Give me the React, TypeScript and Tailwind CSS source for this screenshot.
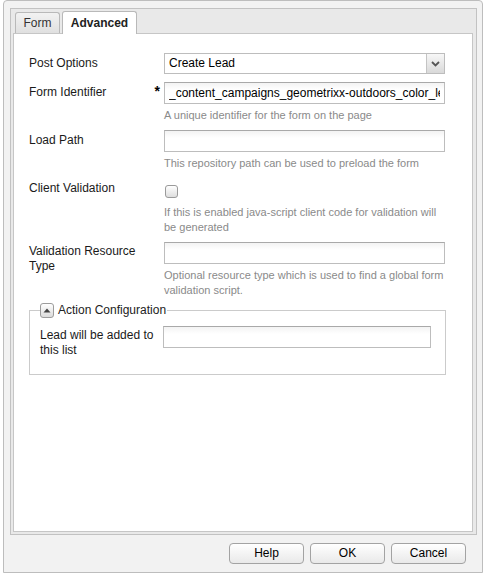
import React from "react";

const font = { fontFamily: '"Liberation Sans", Arial, sans-serif' };

const inputCls =
  "block w-full h-[22px] border border-[#bdbdbd] border-t-[#a9a9a9] bg-gradient-to-b from-[#f3f3f3] to-white to-[35%] px-[4px] text-[12px] text-black outline-none";

const Helper: React.FC<{ children: React.ReactNode }> = ({ children }) => (
  <div className="mt-[4px] whitespace-nowrap text-[11px] leading-[15px] text-[#8a8a8a]">
    {children}
  </div>
);

const Button: React.FC<{ label: string }> = ({ label }) => (
  <button className="h-[21px] w-[75px] rounded-[4px] border border-[#a3a3a3] bg-gradient-to-b from-white to-[#e9e9e9] text-[12px] leading-[19px] text-black">
    {label}
  </button>
);

export default function App() {
  return (
    <div className="min-h-screen bg-white text-[12px] text-[#1a1a1a]" style={font}>
      <div className="ml-[3px] flex h-[573px] w-[480px] flex-col rounded-t-[4px] border border-[#bdbdbd] bg-[#f2f2f2] pl-[6px] pr-[5px] pt-[7px]">
        {/* tab panel */}
        <div className="flex h-[527px] flex-col border border-[#c2c2c2] bg-[#e9e9e9] pb-[2px] pl-[2px] pr-[3px] pt-[2px]">
          <div className="flex h-[22px] items-end gap-[2px] pl-[2px]">
            <div className="flex h-[21px] w-[45px] items-center justify-center rounded-t-[3px] border border-b-0 border-[#b9b9b9] bg-gradient-to-b from-[#f2f2f2] to-[#e0e0e0] text-[12px] text-[#333]">
              Form
            </div>
            <div className="relative z-10 -mb-px flex h-[23px] w-[75px] items-center justify-center rounded-t-[3px] border border-b-0 border-[#b9b9b9] bg-white pb-[1px] text-[12px] font-bold text-[#222]">
              Advanced
            </div>
          </div>

          <div className="flex-1 border border-[#c6c6c6] bg-white pl-[15px] pt-[19px]">
            <div className="grid grid-cols-[135px_281px]">
              {/* Post Options */}
              <div className="pt-[3px] leading-[15px]">Post Options</div>
              <div className="flex h-[21px] border border-[#bdbdbd] bg-white">
                <div className="flex-1 px-[4px] leading-[19px] text-black">Create Lead</div>
                <div className="flex w-[18px] items-center justify-center border-l border-[#c4c4c4] bg-gradient-to-b from-[#f7f7f7] to-[#d9d9d9]">
                  <svg width="9" height="6" viewBox="0 0 9 6">
                    <path d="M1 1 L4.5 4.5 L8 1" fill="none" stroke="#555" strokeWidth="1.8" />
                  </svg>
                </div>
              </div>

              {/* Form Identifier */}
              <div className="mt-[8px] flex justify-between pr-[4px] pt-[3px] leading-[15px]">
                <span>Form Identifier</span>
                <span className="text-[14px] font-bold leading-[12px] text-black">*</span>
              </div>
              <div className="mt-[8px]">
                <input
                  readOnly
                  className={inputCls}
                  value="_content_campaigns_geometrixx-outdoors_color_lead_form"
                />
                <Helper>A unique identifier for the form on the page</Helper>
              </div>

              {/* Load Path */}
              <div className="mt-[7px] pt-[3px] leading-[15px]">Load Path</div>
              <div className="mt-[7px]">
                <input readOnly className={inputCls} value="" />
                <Helper>This repository path can be used to preload the form</Helper>
              </div>

              {/* Client Validation */}
              <div className="mt-[9px] pt-[1px] leading-[15px]">Client Validation</div>
              <div className="mt-[9px]">
                <div className="h-[20px] pl-[1px] pt-[5px]">
                  <div className="h-[13px] w-[13px] rounded-[3px] border border-[#9a9a9a] bg-gradient-to-b from-white to-[#dedede]" />
                </div>
                <div className="mt-[5px] whitespace-nowrap text-[11px] leading-[15px] text-[#8a8a8a]">
                  If this is enabled java-script client code for validation will
                  <br />
                  be generated
                </div>
              </div>

              {/* Validation Resource Type */}
              <div className="mt-[7px] pt-[2px] leading-[15px]">
                Validation Resource
                <br />
                Type
              </div>
              <div className="mt-[7px]">
                <input readOnly className={inputCls} value="" />
                <Helper>
                  Optional resource type which is used to find a global form
                  <br />
                  validation script.
                </Helper>
              </div>
            </div>

            {/* Action Configuration */}
            <fieldset className="mt-[4px] w-[417px] border border-[#cbcbcb] px-[10px] pb-[16px]">
              <legend className="flex h-[16px] items-center gap-[4px] pr-[1px] leading-[15px] text-[#222]">
                <span className="flex h-[15px] w-[14px] items-center justify-center rounded-[3px] border border-[#9c9c9c] bg-gradient-to-b from-white to-[#dcdcdc]">
                  <svg width="8" height="5" viewBox="0 0 8 5">
                    <path d="M0.5 4.5 L4 0.5 L7.5 4.5 Z" fill="#444" />
                  </svg>
                </span>
                <span>Action Configuration</span>
              </legend>
              <div className="mt-[8px] grid grid-cols-[123px_268px]">
                <div className="pt-[2px] leading-[15px]">
                  Lead will be added to
                  <br />
                  this list
                </div>
                <div>
                  <input readOnly className={inputCls} value="" />
                </div>
              </div>
            </fieldset>
          </div>
        </div>

        {/* footer */}
        <div className="flex h-[37px] items-center justify-end gap-[6px] pr-[11px]">
          <Button label="Help" />
          <Button label="OK" />
          <Button label="Cancel" />
        </div>
      </div>
    </div>
  );
}
